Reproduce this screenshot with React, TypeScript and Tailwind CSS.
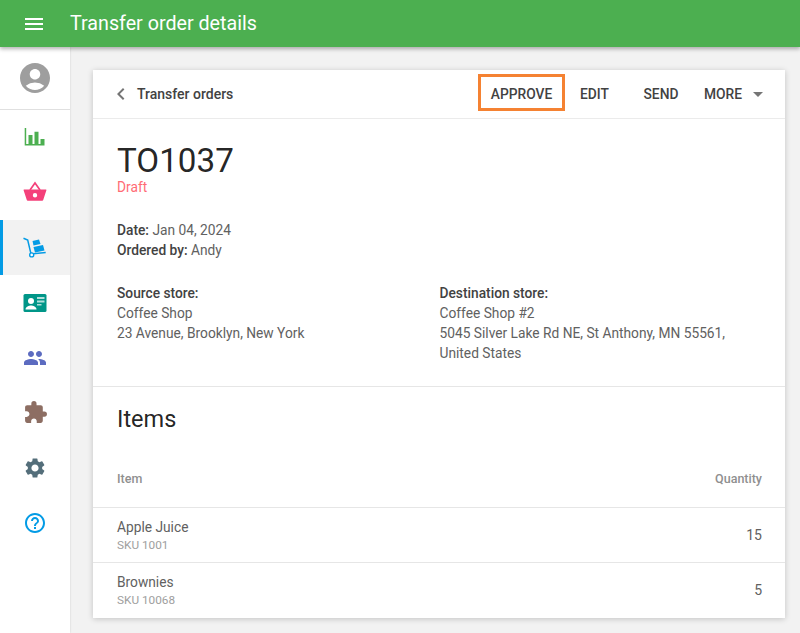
import {
  MdAccountCircle,
  MdArrowDropDown,
  MdChevronLeft,
  MdExtension,
  MdHelpOutline,
  MdMenu,
  MdPeople,
  MdSettings,
} from "react-icons/md";

function ChartIcon() {
  return (
    <svg width="24" height="24" viewBox="0 0 24 24" fill="#4caf50">
      <path d="M1.700 2H3.200V18H21.500V19.500H1.700z" />
      <path d="M5.500 9h4v9h-4zM11.500 5.700h4V18h-4zM17.500 13h4v5h-4z" />
    </svg>
  );
}

function BasketIcon() {
  return (
    <svg width="24" height="24" viewBox="0 0 24 24">
      <path d="M7 9l5-7 5 7" fill="none" stroke="#f4407a" strokeWidth="1.700" />
      <path
        fillRule="evenodd"
        d="M1.200 8.500H22.800a.6.6 0 0 1 .6.8L20.200 19a1 1 0 0 1-1 .7H4.800a1 1 0 0 1-1-.7L.6 9.300a.6.6 0 0 1 .6-.8zM12 12a2.200 2.200 0 1 0 0 4.400A2.200 2.200 0 0 0 12 12z"
        fill="#f4407a"
      />
    </svg>
  );
}

function TruckIcon() {
  return (
    <svg width="24" height="24" viewBox="0 0 24 24" fill="none">
      <path d="M0.500 2.300l4.200 1.700 3.300 14 14.700-1.500" stroke="#039be5" strokeWidth="1.500" />
      <circle cx="8.700" cy="18.900" r="2" fill="#fff" stroke="#039be5" strokeWidth="1.400" />
      <path d="M9.500 5l6.500-1.500 1.500 4.500-7 1.500z" fill="#039be5" />
      <path d="M10.500 11l9.500-2 1.500 5.500-9.500 2z" fill="#039be5" />
    </svg>
  );
}

function CardIcon() {
  return (
    <svg width="24" height="24" viewBox="0 0 24 24">
      <rect x="0.500" y="3" width="23" height="18" rx="1.500" fill="#009688" />
      <circle cx="8" cy="10" r="3" fill="#fff" />
      <path d="M2.500 18.500c0-2.700 3.500-4 5.500-4s5.500 1.300 5.500 4z" fill="#fff" />
      <path d="M14 6h7.500v2H14zM14 9.500h7.500v2H14zM14 13h4.500v1.500H14z" fill="#b2dfdb" />
    </svg>
  );
}

const navItems = [
  { icon: <ChartIcon />, active: false },
  { icon: <BasketIcon />, active: false },
  { icon: <TruckIcon />, active: true },
  { icon: <CardIcon />, active: false },
  { icon: <MdPeople size={24} color="#5c6bc0" />, active: false },
  { icon: <MdExtension size={25} color="#8d6e63" />, active: false },
  { icon: <MdSettings size={24} color="#546e7a" />, active: false },
  { icon: <MdHelpOutline size={24} color="#039be5" />, active: false },
];

const items = [
  { name: "Apple Juice", sku: "SKU 1001", quantity: "15" },
  { name: "Brownies", sku: "SKU 10068", quantity: "5" },
];

export default function App() {
  return (
    <div className="flex h-[633px] w-[800px] flex-col overflow-hidden bg-[#f2f2f2] font-['Roboto',sans-serif] text-[13.75px] text-[rgba(0,0,0,0.87)]">
      {/* Top bar */}
      <header className="z-10 flex h-[47px] shrink-0 items-center bg-[#4caf50] shadow-[0_2px_4px_rgba(0,0,0,0.3)]">
        <div className="flex w-[68px] justify-center">
          <MdMenu size={24} color="#fff" />
        </div>
        <h1 className="ml-[2px] text-[19.7px] leading-6 text-white">Transfer order details</h1>
      </header>

      <div className="flex min-h-0 flex-1">
        {/* Sidebar */}
        <aside className="w-[70px] shrink-0 bg-white shadow-[0_0_2px_rgba(0,0,0,0.15)]">
          <div className="flex h-[63px] items-center justify-center border-b border-[#e0e0e0]">
            <MdAccountCircle size={36} color="#9e9e9e" />
          </div>
          {navItems.map((item, i) => (
            <div
              key={i}
              className={
                item.active
                  ? "flex h-[55px] items-center justify-center border-l-[3px] border-[#039be5] bg-[#f2f2f2] pr-[3px]"
                  : "flex h-[55px] items-center justify-center"
              }
            >
              {item.icon}
            </div>
          ))}
        </aside>

        {/* Order card */}
        <main className="min-w-0 flex-1 pl-[23px] pt-[23px]">
          <div className="h-[548px] w-[692px] bg-white shadow-[0_1px_6px_rgba(0,0,0,0.2)]">
            <div className="flex h-[49px] items-center justify-between border-b border-[#ebebeb] pl-[16px] pr-[20px]">
              <div className="flex items-center">
                <MdChevronLeft size={24} color="#757575" />
                <span className="ml-[4px] text-[14px] font-medium text-[#424242]">Transfer orders</span>
              </div>
              <div className="flex items-center text-[13.8px] font-medium text-[#424242]">
                <span className="-mt-[3px] flex h-[37px] w-[87px] items-center justify-center border-[3px] border-[#f58232] pt-[3px]">
                  APPROVE
                </span>
                <span className="ml-[15px] w-[30px]">EDIT</span>
                <span className="ml-[33.500px] w-[35px]">SEND</span>
                <span className="ml-[25.500px] w-[39px]">MORE</span>
                <MdArrowDropDown size={24} color="#757575" className="ml-[3px] -mr-[5px]" />
              </div>
            </div>

            <div className="border-b border-[#e6e6e6] px-[24px] pb-[23px] pt-[25px]">
              <div className="text-[33.200px] leading-[33px]">TO1037</div>
              <div className="leading-5 text-[#ff6b75]">Draft</div>
              <div className="mt-[23px] leading-5 text-[#616161]">
                <div>
                  <span className="font-medium text-[#424242]">Date:</span> Jan 04, 2024
                </div>
                <div>
                  <span className="font-medium text-[#424242]">Ordered by:</span> Andy
                </div>
              </div>
              <div className="mt-[23px] flex leading-5 text-[#616161]">
                <div className="w-[322.500px]">
                  <div className="font-medium text-[#424242]">Source store:</div>
                  <div>Coffee Shop</div>
                  <div>23 Avenue, Brooklyn, New York</div>
                </div>
                <div className="w-[300px]">
                  <div className="font-medium text-[#424242]">Destination store:</div>
                  <div>Coffee Shop #2</div>
                  <div>5045 Silver Lake Rd NE, St Anthony, MN 55561, United States</div>
                </div>
              </div>
            </div>

            <h2 className="px-[24px] pt-[16px] text-[23.500px] leading-8">Items</h2>

            <div className="mt-[17px] flex h-[56px] items-center justify-between border-b border-[#e6e6e6] pl-[24px] pr-[23px] text-[12.500px] font-medium text-[#8f8f8f]">
              <span>Item</span>
              <span>Quantity</span>
            </div>
            {items.map((item, i) => (
              <div
                key={item.sku}
                className={
                  i === 0
                    ? "flex h-[55px] items-center justify-between border-b border-[#e6e6e6] pl-[24px] pr-[23px]"
                    : "flex h-[55px] items-center justify-between border-b border-transparent pl-[24px] pr-[23px]"
                }
              >
                <div className="pb-[1px]">
                  <div className="leading-5 text-[#616161]">{item.name}</div>
                  <div className="text-[11.800px] leading-4 text-[#9e9e9e]">{item.sku}</div>
                </div>
                <span className="text-[14px] text-[#616161]">{item.quantity}</span>
              </div>
            ))}
          </div>
        </main>
      </div>
    </div>
  );
}
